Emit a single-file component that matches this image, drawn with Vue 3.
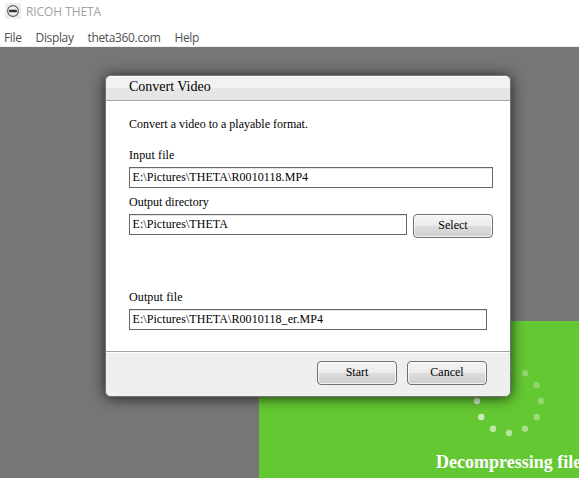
<script setup>
const menus = ['File', 'Display', 'theta360.com', 'Help']
// Dot opacities, clockwise from the right-hand side of the ring.
const ring = [0.3, 0.36, 0.42, 0.52, 0.58, 0.66, 0.72, 0.2, 0.2, 0.2, 0.28, 0.28]
const dots = ring.map((opacity, i) => {
  const a = (i * Math.PI) / 6
  return { opacity, x: 36 + 32 * Math.cos(a), y: 36 + 32 * Math.sin(a) }
})
</script>

<template>
  <div class="window">
    <header class="titlebar">
      <svg class="logo" width="16" height="16" viewBox="0 0 16 16">
        <rect width="16" height="16" rx="1" fill="#eeeeee" />
        <circle cx="8" cy="8" r="5.4" fill="none" stroke="#5c5c5c" stroke-width="1.1" />
        <rect x="4" y="6.8" width="8" height="2.5" rx="1" fill="#303030" />
      </svg>
      <span class="app-name">RICOH THETA</span>
    </header>
    <nav class="menubar">
      <span v-for="m in menus" :key="m" class="menu">{{ m }}</span>
    </nav>
    <main class="workspace">
      <section class="progress">
        <svg class="spinner" width="72" height="72" viewBox="0 0 72 72">
          <circle v-for="(d, i) in dots" :key="i" :cx="d.x" :cy="d.y" r="3.2" fill="#fff" :fill-opacity="d.opacity" />
        </svg>
        <div class="status">Decompressing file</div>
      </section>
      <section class="dialog">
        <h1 class="heading">Convert Video</h1>
        <div class="content">
          <p class="intro">Convert a video to a playable format.</p>
          <div class="label input-label">Input file</div>
          <div class="field input-path">E:\Pictures\THETA\R0010118.MP4</div>
          <div class="label dir-label">Output directory</div>
          <div class="row">
            <div class="field dir-path">E:\Pictures\THETA</div>
            <button class="btn select">Select</button>
          </div>
          <div class="label out-label">Output file</div>
          <div class="field out-path">E:\Pictures\THETA\R0010118_er.MP4</div>
        </div>
        <footer class="actions">
          <button class="btn start">Start</button>
          <button class="btn cancel">Cancel</button>
        </footer>
      </section>
    </main>
  </div>
</template>

<style>
body { margin: 0; overflow: hidden; }
</style>

<style scoped>
.window {
  width: 579px;
  height: 478px;
  display: flex;
  flex-direction: column;
  overflow: hidden;
  background: #fff;
}
.titlebar {
  height: 24px;
  box-sizing: border-box;
  display: flex;
  align-items: center;
  gap: 5px;
  padding-left: 5px;
  font: 12px/24px "Open Sans", "Noto Sans", sans-serif;
  color: #a2a2a2;
}
.logo { display: block; margin-top: -2px; }
.app-name { letter-spacing: -0.08px; }
.menubar {
  height: 22px;
  display: flex;
  gap: 14px;
  padding-left: 4px;
  border-bottom: 1px solid #f0f0f0;
  font: 12px/27px "Open Sans", "Noto Sans", sans-serif;
  letter-spacing: -0.36px;
  color: #505050;
}
.workspace {
  position: relative;
  flex: 1;
  background: #767676;
}
.progress {
  position: absolute;
  left: 259px;
  top: 274px;
  width: 320px;
  height: 157px;
  background: #64c832;
}
.spinner { display: block; margin: 44px 0 0 214px; }
.status {
  margin: 13px 0 0 177px;
  font: bold 18px/24px "Liberation Serif", serif;
  color: #fff;
  white-space: nowrap;
}
.dialog {
  position: absolute;
  left: 105px;
  top: 28px;
  width: 406px;
  height: 322px;
  box-sizing: border-box;
  display: flex;
  flex-direction: column;
  border: 1px solid #737373;
  border-radius: 6px;
  background: #fff;
  box-shadow: 0 1px 14px rgba(0, 0, 0, 0.75);
  overflow: hidden;
  font: 12px/16px "Liberation Serif", serif;
  color: #000;
}
.heading {
  height: 25px;
  box-sizing: border-box;
  margin: 0;
  padding-left: 23px;
  border-bottom: 1px solid #a5a5a5;
  background: linear-gradient(#fff 1px, #f2f2f2 1px, #f2f2f2 12px, #e6e6e6 12px);
  font-size: 14px;
  font-weight: normal;
  line-height: 21px;
}
.content { flex: 1; padding: 15px 17px 0 23px; }
.intro { margin: 0; }
.label { height: 16px; letter-spacing: 0.12px; }
.input-label { margin-top: 15px; }
.field {
  height: 21px;
  box-sizing: border-box;
  margin-top: 4px;
  padding-left: 2.5px;
  border: 1px solid #686868;
  box-shadow: inset 0 1px #e4e4e4;
  background: #fff;
  line-height: 18px;
  letter-spacing: 0.07px;
  white-space: nowrap;
}
.input-path { width: 364px; }
.dir-label { margin-top: 6px; letter-spacing: 0; }
.row { display: flex; gap: 6px; margin-top: 4px; height: 24px; }
.dir-path { width: 278px; margin-top: 0; }
.out-label { margin-top: 51px; }
.out-path { width: 358px; }
.btn {
  width: 80px;
  height: 24px;
  box-sizing: border-box;
  padding: 0 0 2px;
  border: 1px solid #707070;
  border-radius: 4px;
  background: linear-gradient(#f4f4f4, #ebebeb 50%, #dddddd 50%, #cfcfcf);
  box-shadow: inset 0 0 0 1px rgba(255, 255, 255, 0.75);
  font: 12px/20px "Liberation Serif", serif;
  color: #000;
}
.actions {
  height: 45px;
  box-sizing: border-box;
  display: flex;
  justify-content: flex-end;
  gap: 10px;
  padding: 9px 23px 0 0;
  border-top: 1px solid #a5a5a5;
  background: #efefef;
  box-shadow: inset 0 1px #fff;
}
</style>
